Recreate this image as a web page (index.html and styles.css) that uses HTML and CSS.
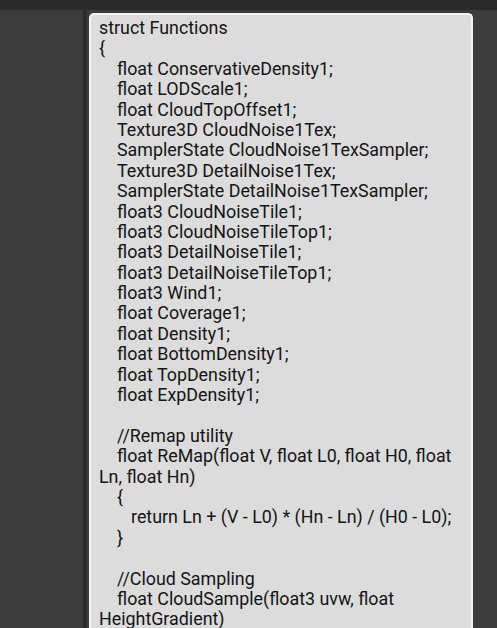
FILE: index.html
```html
<!DOCTYPE html>
<html>
<head>
<meta charset="utf-8">
<link rel="stylesheet" href="styles.css">
</head>
<body>
<div class="topbar"></div>
<div class="main">
  <div class="left-panel"></div>
  <div class="separator"></div>
  <div class="code-box">
    <div class="ln">struct Functions</div>
    <div class="ln">{</div>
    <div class="ln i1">float ConservativeDensity1;</div>
    <div class="ln i1">float LODScale1;</div>
    <div class="ln i1">float CloudTopOffset1;</div>
    <div class="ln i1">Texture3D CloudNoise1Tex;</div>
    <div class="ln i1">SamplerState CloudNoise1TexSampler;</div>
    <div class="ln i1">Texture3D DetailNoise1Tex;</div>
    <div class="ln i1">SamplerState DetailNoise1TexSampler;</div>
    <div class="ln i1">float3 CloudNoiseTile1;</div>
    <div class="ln i1">float3 CloudNoiseTileTop1;</div>
    <div class="ln i1">float3 DetailNoiseTile1;</div>
    <div class="ln i1">float3 DetailNoiseTileTop1;</div>
    <div class="ln i1">float3 Wind1;</div>
    <div class="ln i1">float Coverage1;</div>
    <div class="ln i1">float Density1;</div>
    <div class="ln i1">float BottomDensity1;</div>
    <div class="ln i1">float TopDensity1;</div>
    <div class="ln i1">float ExpDensity1;</div>
    <div class="ln blank"></div>
    <div class="ln i1">//Remap utility</div>
    <div class="ln i1">float ReMap(float V, float L0, float H0, float</div>
    <div class="ln">Ln, float Hn)</div>
    <div class="ln i1">{</div>
    <div class="ln i2">return Ln + (V - L0) * (Hn - Ln) / (H0 - L0);</div>
    <div class="ln i1">}</div>
    <div class="ln blank"></div>
    <div class="ln i1">//Cloud Sampling</div>
    <div class="ln i1">float CloudSample(float3 uvw, float</div>
    <div class="ln">HeightGradient)</div>
  </div>
  <div class="right-panel"></div>
</div>
</body>
</html>
```

FILE: styles.css
```css
html, body {
  margin: 0;
  padding: 0;
  height: 100%;
  overflow: hidden;
}
body {
  background: #3b3b3b;
  font-family: Roboto, "Liberation Sans", sans-serif;
}
.topbar {
  height: 10px;
  background: #2a2a2a;
}
.main {
  display: grid;
  grid-template-columns: 83px 4px 386px 1fr;
  padding-top: 3px;
  height: 615px;
}
.left-panel {
  background: #3c3c3c;
}
.separator {
  background: #2b2b2b;
  margin-top: -3px;
}
.code-box {
  margin-left: 2px;
  background: #dcdcdc;
  border: 2px solid #f4f4f4;
  border-bottom: none;
  border-radius: 5px 5px 0 0;
  padding: 3px 4px 0 8px;
  color: #141414;
  font-size: 17.85px;
  line-height: 20.4px;
  overflow: hidden;
}
.ln {
  height: 20.4px;
  white-space: pre;
}
.i1 { padding-left: 18px; }
.i2 { padding-left: 32px; }
.right-panel {
  background: #3d3d3d;
}
```
